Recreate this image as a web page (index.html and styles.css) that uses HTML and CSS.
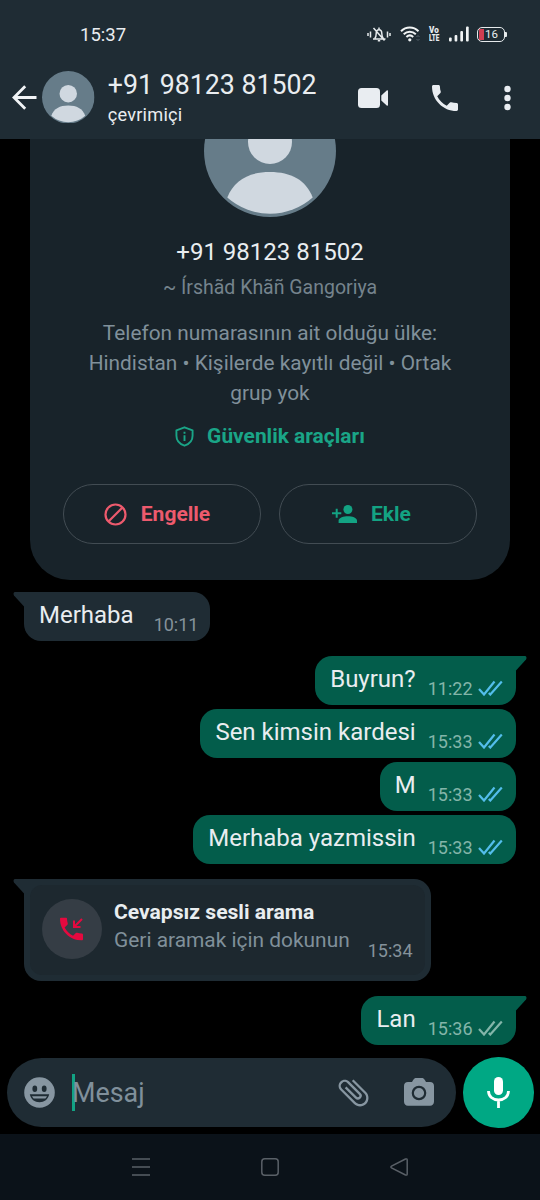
FILE: index.html
```html
<!DOCTYPE html>
<html lang="tr">
<head>
<meta charset="utf-8">
<title>Sohbet</title>
<link rel="stylesheet" href="styles.css">
</head>
<body>
<svg class="defs" width="0" height="0">
  <symbol id="avatar" viewBox="0 0 132 132">
    <circle cx="66" cy="66" r="66" fill="#667c89"/>
    <circle cx="66" cy="57" r="22" fill="#d0d8e0"/>
    <path d="M23.3 112.5C30 95 45 87 66 87s36 8 42.7 25.500A64.400 64.400 0 0 1 23.300 112.500z" fill="#d0d8e0"/>
  </symbol>
  <symbol id="phone" viewBox="3 3 18 18">
    <path d="M6.620 10.790c1.440 2.830 3.760 5.140 6.590 6.590l2.200-2.200c.27-.27.67-.36 1.020-.24 1.120.37 2.330.57 3.570.57.55 0 1 .45 1 1V20c0 .55-.45 1-1 1-9.390 0-17-7.610-17-17 0-.55.45-1 1-1h3.500c.55 0 1 .45 1 1 0 1.250.2 2.450.57 3.570.11.35.03.74-.25 1.020l-2.200 2.200z" fill="currentColor"/>
  </symbol>
  <symbol id="ticks" viewBox="0 0 25 16">
    <path d="M1 9L6 14.500 16.500 1.500M10.800 13L12.300 14.500 23.800 1.500" fill="none" stroke="currentColor" stroke-width="2.200"/>
  </symbol>
</svg>

<header class="top">
  <div class="status">
    <time class="clock">15:37</time>
    <div class="indicators">
      <svg class="silent" width="24" height="18" viewBox="0 0 24 18" fill="none" stroke="#e6eaec" stroke-width="1.500">
        <path d="M1 8v3M3.500 6.500v6M20.500 6.500v6M23 8v3M6 14h12.500M7.800 13.500c1.200-1.500 1.400-2.500 1.400-5 0-2.200 1.100-3.800 2.800-3.800s2.800 1.600 2.800 3.800c0 2.500.2 3.500 1.700 5.500M12 2.500v2M6.500 3l11 12.500M10.800 15.800h2.400"/>
      </svg>
      <svg class="wifi" width="20" height="16" viewBox="0 0 20 16" fill="none" stroke="#f1f4f5" stroke-width="2">
        <path d="M1 5.200c5-5 12.500-5 17.500 0M3.700 8.200c3.500-3.300 8.600-3.300 12.100 0M6.400 11c2-1.900 4.800-1.900 6.800 0"/>
        <circle cx="9.800" cy="13.800" r="1.600" fill="#f1f4f5" stroke="none"/>
        <path d="M16.500 11l1.500-1.500 1.500 1.500M16.500 13l1.500 1.500 1.500-1.500" stroke="#53616a" stroke-width="1"/>
      </svg>
      <span class="volte"><span class="vo">Vo</span><span class="lte">LTE</span></span>
      <svg class="signal" width="20" height="16" viewBox="0 0 20 16" fill="#f1f4f5">
        <rect x="0" y="11.500" width="2.700" height="4" rx="1"/><rect x="5.600" y="9" width="2.700" height="6.500" rx="1"/><rect x="11.300" y="5" width="2.700" height="10.500" rx="1"/><rect x="17" y="0.500" width="2.700" height="15" rx="1"/>
      </svg>
      <div class="battery"><span>16</span></div>
    </div>
  </div>
  <div class="appbar">
    <svg class="back" width="25" height="25" viewBox="0 0 25 25" fill="none" stroke="#f1f4f6" stroke-width="2.800"><path d="M24.500 12.500H2.500M13.200 1.300L2 12.500l11.200 11.200"/></svg>
    <svg class="avatar-small"><use href="#avatar"/></svg>
    <div class="contact">
      <div class="contact-name">+91 98123 81502</div>
      <div class="presence">çevrimiçi</div>
    </div>
    <div class="actions">
      <svg width="30" height="20" viewBox="0 0 30 20" fill="#e9edf1"><rect width="22" height="20" rx="3.500"/><path d="M23.300 7.500l5.400-5c.6-.6 1.300-.3 1.300.4v14.200c0 .7-.7 1-1.300.4l-5.400-5z"/></svg>
      <svg class="call" width="26" height="26"><use href="#phone"/></svg>
      <svg class="more" width="7" height="26" viewBox="0 0 7 26" fill="#e9edf1"><circle cx="3.500" cy="4" r="3.200"/><circle cx="3.500" cy="13" r="3.200"/><circle cx="3.500" cy="22" r="3.200"/></svg>
    </div>
  </div>
</header>

<main class="chat">
  <section class="card">
    <svg class="avatar-big"><use href="#avatar"/></svg>
    <div class="card-number">+91 98123 81502</div>
    <div class="card-name">~ Írshãd Khãñ Gangoriya</div>
    <p class="card-info">Telefon numarasının ait olduğu ülke:<br>Hindistan • Kişilerde kayıtlı değil • Ortak<br>grup yok</p>
    <div class="safety">
      <svg width="19" height="21" viewBox="0 0 20 22" fill="none" stroke="currentColor" stroke-width="2"><path d="M10 1.300L1.500 4.500v5.800c0 4.800 3.400 8.800 8.500 10.400 5.100-1.600 8.500-5.600 8.500-10.400V4.500z" stroke-linejoin="round"/><path d="M10 9.800v6M10 6v2.100"/></svg>
      <span>Güvenlik araçları</span>
    </div>
    <div class="card-buttons">
      <div class="pill block">
        <svg width="23" height="23" viewBox="0 0 23 23" fill="none" stroke="currentColor" stroke-width="2.200"><circle cx="11.500" cy="11.500" r="10"/><path d="M4.500 18.500l14-14"/></svg>
        <span>Engelle</span>
      </div>
      <div class="pill add">
        <svg width="25" height="18" viewBox="0 0 25 18" fill="currentColor"><circle cx="15.900" cy="4.500" r="4.500"/><path d="M6.600 18v-2.400c0-3 5.200-4.400 9.300-4.400s9.100 1.400 9.100 4.400V18zM3.700 3.700h2v3.500H9.300v2H5.700v3.500h-2V9.200H0v-2h3.700z"/></svg>
        <span>Ekle</span>
      </div>
    </div>
  </section>

  <div class="msg in first tail"><span class="text">Merhaba</span><time>10:11</time></div>
  <div class="msg out first tail"><span class="text">Buyrun?</span><time>11:22</time><svg class="ticks read"><use href="#ticks"/></svg></div>
  <div class="msg out"><span class="text">Sen kimsin kardesi</span><time>15:33</time><svg class="ticks read"><use href="#ticks"/></svg></div>
  <div class="msg out"><span class="text">M</span><time>15:33</time><svg class="ticks read"><use href="#ticks"/></svg></div>
  <div class="msg out"><span class="text">Merhaba yazmissin</span><time>15:33</time><svg class="ticks read"><use href="#ticks"/></svg></div>
  <div class="msg in first tail missed">
    <div class="missed-body">
      <div class="missed-icon">
        <svg width="24" height="24" viewBox="0 0 24 24"><use href="#phone" x="0" y="0.500" width="23" height="23"/><path d="M22 2l-7.500 7.500M14 3.500V10h6.500" fill="none" stroke="currentColor" stroke-width="2"/></svg>
      </div>
      <div class="missed-text">
        <div class="missed-title">Cevapsız sesli arama</div>
        <div class="missed-sub">Geri aramak için dokunun</div>
      </div>
      <time>15:34</time>
    </div>
  </div>
  <div class="msg out first tail"><span class="text">Lan</span><time>15:36</time><svg class="ticks"><use href="#ticks"/></svg></div>
</main>

<footer class="composer">
  <div class="field">
    <svg class="emoji" width="31" height="31" viewBox="0 0 31 31"><circle cx="15.500" cy="15.500" r="15.300" fill="#8796a1"/><g fill="#1f2c34"><ellipse cx="10.800" cy="11.800" rx="2.400" ry="3.200"/><ellipse cx="20.200" cy="11.800" rx="2.400" ry="3.200"/><path d="M5.800 17.300h19.400c-1 5-5 8-9.700 8s-8.700-3-9.700-8z"/></g><path d="M8 19.200h15c-.5 1-1 1.700-1.600 2.200H9.600c-.6-.5-1.100-1.200-1.600-2.200z" fill="#8796a1"/></svg>
    <span class="placeholder">Mesaj</span>
    <svg class="clip" width="37" height="37" viewBox="0 0 24 24"><path transform="rotate(-45 12 12)" d="M16.500 6v11.500c0 2.210-1.790 4-4 4s-4-1.790-4-4V5a2.500 2.500 0 0 1 5 0v10.500c0 .55-.45 1-1 1s-1-.45-1-1V6H10v9.500a2.500 2.500 0 0 0 5 0V5c0-2.210-1.790-4-4-4S7 2.790 7 5v12.500c0 3.040 2.460 5.500 5.500 5.500s5.500-2.460 5.500-5.500V6h-1.500z" fill="#8796a1"/></svg>
    <svg class="camera" width="30" height="28" viewBox="0 0 30 28"><path d="M9 2.200C10 .6 10.800 0 12.500 0h5c1.700 0 2.500.6 3.500 2.200l1 1.800h4c2.500 0 4 1.500 4 4v15.500c0 2.500-1.500 4.300-4 4.300H4c-2.500 0-4-1.800-4-4.300V8c0-2.500 1.500-4 4-4h4z" fill="#8796a1"/><circle cx="15" cy="15" r="6.200" fill="none" stroke="#1f2c34" stroke-width="2.200"/></svg>
  </div>
  <div class="mic">
    <svg width="23" height="31" viewBox="0 0 23 31"><rect x="7" y="0" width="9" height="18" rx="4.500" fill="#fff"/><path d="M1.500 14c0 5.500 4.200 9 10 9s10-3.500 10-9M11.500 23v8" fill="none" stroke="#fff" stroke-width="2.800"/></svg>
  </div>
</footer>

<nav class="nav">
  <svg width="18" height="18" viewBox="0 0 18 18" stroke="#5a6067" stroke-width="1.700"><path d="M0 1h18M0 9h18M0 17h18"/></svg>
  <svg width="18" height="18" viewBox="0 0 18 18" fill="none" stroke="#5a6067" stroke-width="1.500"><rect x="0.800" y="0.800" width="16.400" height="16.400" rx="3"/></svg>
  <svg width="18" height="18" viewBox="0 0 18 18" fill="none" stroke="#5a6067" stroke-width="1.500"><path d="M15.500 1L1.500 8.200q-1.200.8 0 1.600L15.500 17q1.700.5 1.700-1V2q0-1.500-1.700-1z"/></svg>
</nav>
</body>
</html>
```
FILE: styles.css
```css
* { box-sizing: border-box; }
html, body { margin: 0; }
body {
  width: 540px;
  height: 1200px;
  overflow: hidden;
  display: flex;
  flex-direction: column;
  background: #000;
  color: #e9edf0;
  font-family: Roboto, "Liberation Sans", sans-serif;
}
svg { display: block; flex: none; }
.defs { position: absolute; }

.top { flex: none; height: 139px; background: #1f2c34; position: relative; z-index: 1; }
.status { height: 56px; padding: 12px 35px 0 80px; display: flex; justify-content: space-between; }
.clock { font-size: 18.500px; line-height: 46px; }
.indicators { display: flex; align-items: center; height: 44px; }
.wifi { margin-left: 9px; }
.volte { display: grid; grid-template-rows: 8.500px 8.500px; justify-items: start; margin-left: 9px; width: 11px; font-weight: 900; font-size: 8.500px; line-height: 8.500px; }
.volte span { transform-origin: 0 50%; }
.vo { transform: scaleX(.95); }
.lte { transform: scaleX(.75); }
.signal { margin-left: 9px; }
.battery {
  position: relative;
  margin-left: 8px;
  width: 28px;
  height: 15px;
  border: 1.500px solid #e6eaec;
  border-radius: 5px;
  background: linear-gradient(#d13d51, #d13d51) 1px 1px / 5px 11px no-repeat;
  font-size: 11.500px;
  line-height: 13px;
  padding-left: 7px;
}
.battery::after { content: ""; position: absolute; right: -3px; top: 4px; width: 2px; height: 5px; background: #e6eaec; border-radius: 0 1px 1px 0; }

.appbar { height: 83px; padding: 0 29.500px 0 12px; display: flex; align-items: center; }
.back { margin-top: -1px; }
.avatar-small { width: 52.500px; height: 52.500px; margin: -1.500px 0 0 5.300px; }
.contact { margin-left: 13px; }
.contact-name { font-size: 26.750px; line-height: 32px; margin-top: 1px; white-space: nowrap; }
.presence { font-size: 18.200px; line-height: 24px; margin-top: 2px; letter-spacing: .2px; }
.actions { margin: 0 0 0 auto; display: flex; align-items: center; color: #e9edf1; }
.call { margin-left: 44px; }
.more { margin-left: 46px; }

.chat {
  flex: none;
  height: 918px;
  overflow: hidden;
  display: flex;
  flex-direction: column;
  justify-content: flex-end;
  padding: 0 24px 12.500px;
}
.card {
  flex: none;
  align-self: center;
  width: 480px;
  padding: 24px 33px 36px;
  background: #18232a;
  border-radius: 40px;
  display: flex;
  flex-direction: column;
  align-items: center;
  text-align: center;
  color: #8091a0;
}
.avatar-big { width: 132px; height: 132px; }
.card-number { margin-top: 19px; font-size: 24px; line-height: 32px; color: #e9edf0; }
.card-name { margin-top: 7px; font-size: 19.500px; line-height: 26px; color: #75838d; }
.card-info { margin: 17px 0 0; font-size: 20.850px; line-height: 30px; color: #80909a; white-space: nowrap; }
.safety { margin-top: 14px; display: flex; align-items: center; gap: 13px; font-size: 20.950px; line-height: 28px; font-weight: 700; color: #1aa587; }
.card-buttons { margin-top: 34px; width: 414px; display: flex; justify-content: space-between; }
.pill {
  width: 198px;
  height: 60px;
  border: 1.500px solid #424c53;
  border-radius: 30px;
  display: flex;
  align-items: center;
  justify-content: center;
  gap: 14px;
  font-size: 21px;
  font-weight: 700;
}
.block { color: #ed5a6d; padding-right: 10px; }
.add { color: #13a383; padding-right: 13px; }

.msg {
  flex: none;
  position: relative;
  height: 49px;
  margin-top: 4px;
  padding: 0 12px 0 15px;
  border-radius: 17px;
  display: flex;
  align-items: flex-start;
  white-space: nowrap;
}
.text { font-size: 24px; line-height: 46px; }
.msg time { font-size: 18px; line-height: 66px; color: #84929b; }
.in { align-self: flex-start; background: #1f2c34; }
.out { align-self: flex-end; background: #035d4b; padding-right: 13px; }
.first { margin-top: 15px; }
.card + .msg { margin-top: 11.500px; }
.in .text + time { margin-left: 20px; }
.out .text + time { margin-left: 12px; }
.out time { color: #83b5a9; }
.in.tail { border-top-left-radius: 0; }
.out.tail { border-top-right-radius: 0; }
.tail::before { content: ""; position: absolute; top: 0; width: 14px; height: 16px; background: inherit; }
.in.tail::before { left: -11px; clip-path: path("M14 0H2.500Q-.5 1 1 4L11 15H14z"); }
.out.tail::before { right: -11px; clip-path: path("M0 0H11.500Q14.500 1 13 4L3 15H0z"); }
.ticks { width: 25px; height: 16px; margin: 24px 0 0 5.500px; color: #83b5a9; }
.ticks.read { color: #53bdeb; }

.missed { width: 406.500px; height: 102px; padding: 6px; }
.missed-body { flex: 1; height: 90px; border-radius: 12px; background: #1d282f; display: flex; align-items: flex-start; padding: 0 12px; }
.missed-icon { flex: none; width: 60px; height: 60px; margin-top: 14.500px; border-radius: 50%; background: #353d45; color: #e5093f; display: flex; align-items: center; justify-content: center; }
.missed-text { margin-left: 12px; padding-top: 13px; }
.missed-title { font-size: 21.100px; line-height: 28px; font-weight: 700; }
.missed-sub { font-size: 20.900px; line-height: 28px; color: #80909a; }
.missed time { margin-left: auto; line-height: 24px; padding-top: 54px; }

.composer { flex: none; height: 77px; padding: 0 6.500px 0 7px; display: flex; justify-content: space-between; align-items: flex-start; }
.field { width: 449px; height: 69px; margin-top: 1px; padding: 0 22px 0 17px; border-radius: 35px; background: #1f2c34; display: flex; align-items: center; }
.placeholder { margin-left: 17px; height: 37px; box-shadow: inset 3px 0 #12a384; font-size: 26.900px; line-height: 38px; color: #80909b; }
.clip { margin-left: auto; }
.camera { margin-left: 32px; margin-top: -2px; }
.mic { width: 70.500px; height: 70.500px; border-radius: 50%; background: #00a884; display: flex; align-items: center; justify-content: center; }

.nav { flex: none; height: 66px; background: #0b1219; display: flex; align-items: center; justify-content: center; gap: 111px; }
```
